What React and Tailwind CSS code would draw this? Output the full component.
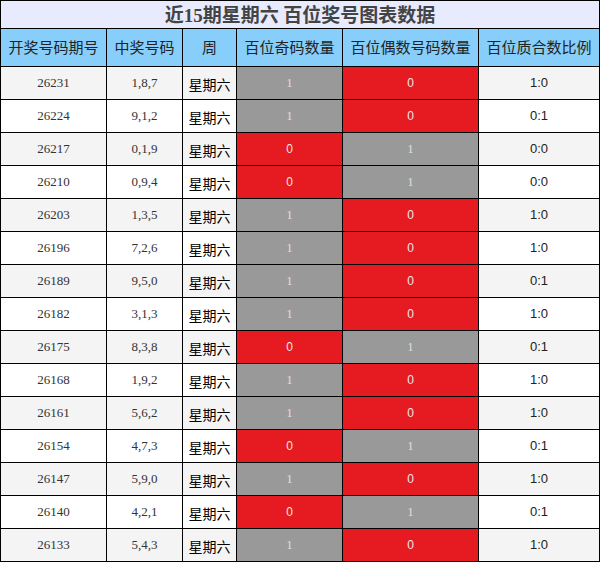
const rows = [
  ['26231', '1,8,7', 1, 0, '1:0'],
  ['26224', '9,1,2', 1, 0, '0:1'],
  ['26217', '0,1,9', 0, 1, '0:0'],
  ['26210', '0,9,4', 0, 1, '0:0'],
  ['26203', '1,3,5', 1, 0, '1:0'],
  ['26196', '7,2,6', 1, 0, '1:0'],
  ['26189', '9,5,0', 1, 0, '0:1'],
  ['26182', '3,1,3', 1, 0, '1:0'],
  ['26175', '8,3,8', 0, 1, '0:1'],
  ['26168', '1,9,2', 1, 0, '1:0'],
  ['26161', '5,6,2', 1, 0, '1:0'],
  ['26154', '4,7,3', 0, 1, '0:1'],
  ['26147', '5,9,0', 1, 0, '1:0'],
  ['26140', '4,2,1', 0, 1, '0:1'],
  ['26133', '5,4,3', 1, 0, '1:0'],
];

const headers = ['开奖号码期号', '中奖号码', '周', '百位奇码数量', '百位偶数号码数量', '百位质合数比例'];

function CountCell({ v }) {
  // 0 shows on red, 1 on grey
  return v === 0 ? (
    <td className="border border-black bg-[#e61b21] text-center text-[12px] text-[#e8e8e8] font-['Liberation_Sans',sans-serif]">0</td>
  ) : (
    <td className="border border-black bg-[#999999] text-center text-[12px] text-[#e0e0e0] font-['Liberation_Serif',serif]">1</td>
  );
}

export default function App() {
  return (
    <div className="w-[600px] h-[562px] bg-white">
      <table className="w-[599px] border-collapse table-fixed font-['Noto_Sans_CJK_SC',sans-serif]">
        <colgroup>
          <col className="w-[106px]" />
          <col className="w-[76px]" />
          <col className="w-[54px]" />
          <col className="w-[106px]" />
          <col className="w-[136px]" />
          <col className="w-[121px]" />
        </colgroup>
        <thead>
          <tr className="h-[28px]">
            <th colSpan={6} className="border border-black bg-[#e8eafd] p-0 text-[19px] font-bold text-[#444] leading-none">
              近<span className="font-['Liberation_Serif',serif]">15</span>期星期六 百位奖号图表数据
            </th>
          </tr>
          <tr className="h-[38px]">
            {headers.map(h => (
              <th key={h} className="border border-black bg-[#87cefa] p-0 text-[15px] font-normal text-[#222]">{h}</th>
            ))}
          </tr>
        </thead>
        <tbody>
          {rows.map((r, i) => (
            <tr key={r[0]} className={`h-[33px] ${i % 2 === 0 ? 'bg-[#f4f4f4]' : 'bg-white'}`}>
              <td className="border border-black p-0 text-center text-[13px] text-[#333] font-['Liberation_Serif',serif]">{r[0]}</td>
              <td className="border border-black p-0 text-center text-[13px] text-[#333] font-['Liberation_Serif',serif]">{r[1]}</td>
              <td className="border border-black p-0 pt-[3px] text-center text-[14px] text-black">星期六</td>
              <CountCell v={r[2]} />
              <CountCell v={r[3]} />
              <td className="border border-black p-0 text-center text-[13px] text-[#222] font-['Liberation_Sans',sans-serif]">{r[4]}</td>
            </tr>
          ))}
        </tbody>
      </table>
    </div>
  );
}
